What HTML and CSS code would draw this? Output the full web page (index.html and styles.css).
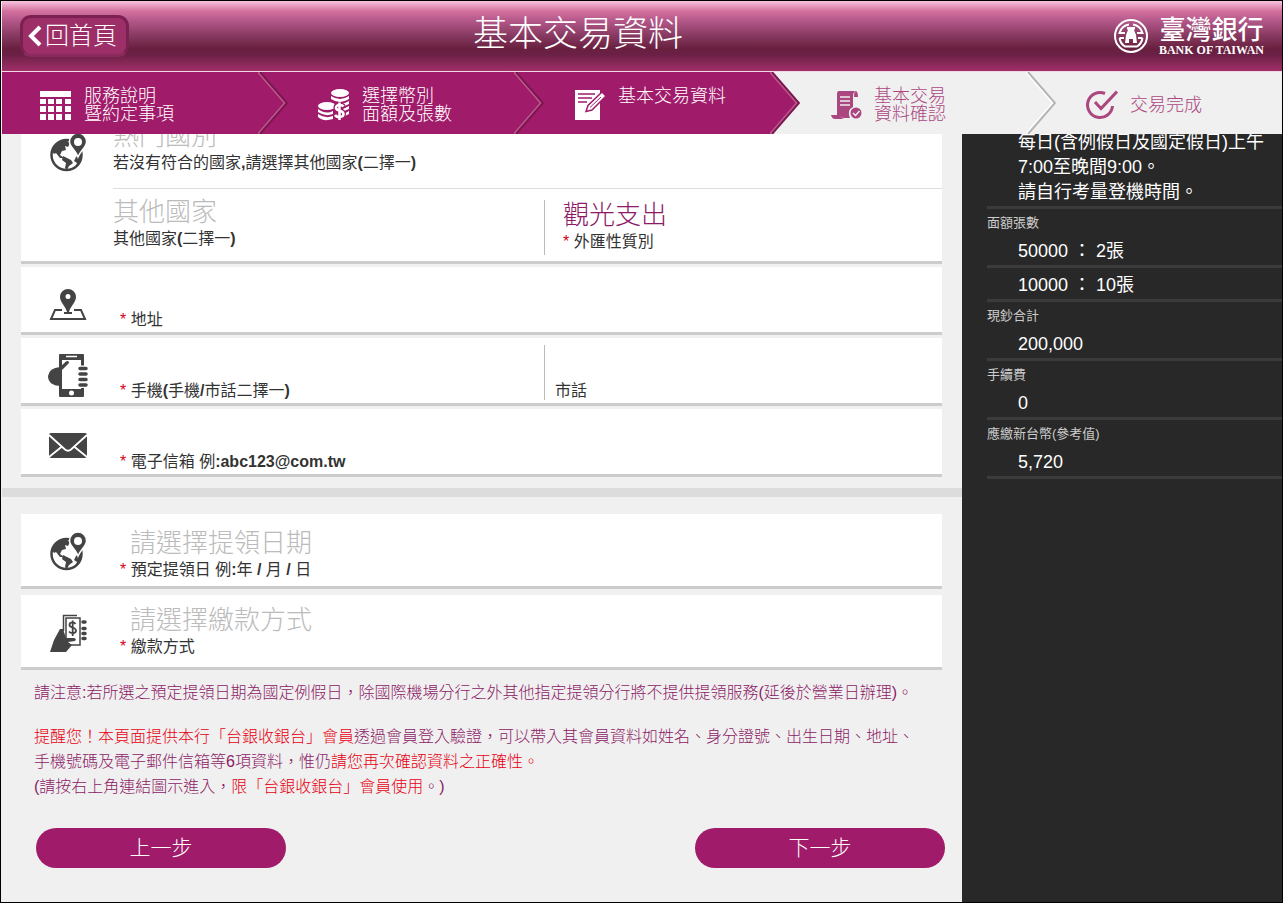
FILE: index.html
```html
<!DOCTYPE html>
<html lang="zh-Hant">
<head>
<meta charset="UTF-8">
<meta name="viewport" content="width=device-width, initial-scale=1.0">
<title>基本交易資料</title>
<link rel="stylesheet" href="styles.css">
</head>
<body>
<header class="topbar">
  <div class="topbar-left">
    <button type="button" class="home-btn">
      <svg width="14" height="22" viewBox="0 0 14 22"><path d="M12 2 L3 11 L12 20" fill="none" stroke="#fff" stroke-width="4"/></svg>回首頁
    </button>
  </div>
  <h1>基本交易資料</h1>
  <a href="#" class="logo">
    <svg width="36" height="36" viewBox="0 0 36 36">
      <g fill="none" stroke="#fff">
        <circle cx="18" cy="18" r="16" stroke-width="2"/>
        <path d="M16 6.500 A12 12 0 0 0 6.500 15 H12 M20 6.500 A12 12 0 0 1 29.500 15 H24 M6.500 20 H11 M29.500 20 H25 M6.500 20 A12 12 0 0 0 12 28.500 H24 A12 12 0 0 0 29.500 20" stroke-width="2"/>
      </g>
      <path d="M14 9 H22 V11 L21 12 L23 17 L24 25 H20 V21 H16 V25 H12 L13 17 L15 12 L14 11 Z" fill="#fff"/>
    </svg>
    <span class="logo-text">
      <span class="logo-zh">臺灣銀行</span>
      <span class="logo-en">BANK OF TAIWAN</span>
    </span>
  </a>
</header>

<nav>
  <ol class="steps">
    <li class="step done">
      <svg class="step-icon" viewBox="0 0 32 32" fill="#fff">
        <path d="M0 2h31v6H0z M0 10h6v5H0z M8 10h6v5H8z M16 10h6v5h-6z M25 10h6v5h-6z M0 17h6v6H0z M8 17h6v6H8z M16 17h6v6h-6z M25 17h6v6h-6z M0 25h6v6H0z M8 25h6v6H8z M16 25h6v6h-6z M25 25h6v6h-6z"/>
      </svg>
      <span>服務說明<br>暨約定事項</span>
      <svg class="arrow" viewBox="0 0 30 62"><path class="fill" d="M0 0 L28 31 L0 62 Z"/><path class="light" d="M0 0 L27 31 L0 62"/><path class="line" d="M2 0 L29 31 L2 62"/></svg>
    </li>
    <li class="step done">
      <svg class="step-icon" viewBox="0 0 32 32" fill="#fff">
        <ellipse cx="22" cy="4" rx="9" ry="4"/>
        <path d="M13 7 Q22 13 31 7 V10 Q22 16 13 10 Z M20 14.500 Q27 15 31 12 V15 Q26 18 20 17 Z M25 20 L31 17 V20 L26 22 Z M26 25 L31 22 V25 L27 27 Z"/>
        <ellipse cx="9" cy="17" rx="9" ry="4"/>
        <path d="M0 20 Q8 26 15 22 V25 Q7 28 0 23 Z M0 25 Q7 30 15 27 V30 Q5 33 0 28 Z"/>
        <path d="M25.500 17.500 C24 15 17.500 15.500 18 19 C18.500 22.500 25.500 21 25.500 25 C25.500 29 18.500 28.500 17 26 M21.500 13.500 V31" fill="none" stroke="#a11b6b" stroke-width="5"/>
        <path d="M25.500 17.500 C24 15 17.500 15.500 18 19 C18.500 22.500 25.500 21 25.500 25 C25.500 29 18.500 28.500 17 26 M21.500 13.500 V31" fill="none" stroke="#fff" stroke-width="2.500"/>
      </svg>
      <span>選擇幣別<br>面額及張數</span>
      <svg class="arrow" viewBox="0 0 30 62"><path class="fill" d="M0 0 L28 31 L0 62 Z"/><path class="light" d="M0 0 L27 31 L0 62"/><path class="line" d="M2 0 L29 31 L2 62"/></svg>
    </li>
    <li class="step done">
      <svg class="step-icon" viewBox="0 0 32 32">
        <path d="M1 1h25v30H1z" fill="#fff"/>
        <path d="M4 5h17 M4 9h14 M4 13h9" stroke="#a11b6b" stroke-width="1.500"/>
        <path d="M12 22.500 L14 16.500 L28 3 L32 7 L18 21 Z" fill="#fff" stroke="#a11b6b" stroke-width="1.500"/>
        <path d="M16 18.500 L27 8" stroke="#a11b6b" stroke-width="1"/>
      </svg>
      <span>基本交易資料<br>&nbsp;</span>
      <svg class="arrow" viewBox="0 0 30 62"><path class="fill" d="M0 0 L28 31 L0 62 Z"/><path class="light" d="M0 0 L27 31 L0 62"/><path class="line" d="M2 0 L29 31 L2 62"/></svg>
    </li>
    <li class="step">
      <svg class="step-icon" viewBox="0 0 32 32" fill="#ab477f">
        <path d="M9 2 H25 Q23 4 23 8 V18 Q18 20 19 26 L20 29 H14 Q10 29 10 26 H7 V5 Q7 2 9 2 Z"/>
        <path d="M24 8 Q24 2 26 2 Q28 3 28 8 Z"/>
        <path d="M1 26 H10 Q11 29 14 30 H5 Q2 30 1 26 Z"/>
        <path d="M10 8h10 M10 12h10 M10 16h10" stroke="#f0f0f0" stroke-width="1.500"/>
        <circle cx="26" cy="24" r="5.500"/>
        <path d="M23 24 L25.500 26.500 L29.500 22" fill="none" stroke="#f0f0f0" stroke-width="1.500"/>
      </svg>
      <span>基本交易<br>資料確認</span>
      <svg class="arrow" viewBox="0 0 30 62"><path class="fill" d="M0 0 L28 31 L0 62 Z"/><path class="light" d="M0 0 L27 31 L0 62"/><path class="line" d="M2 0 L29 31 L2 62"/></svg>
    </li>
    <li class="step">
      <svg class="step-icon" viewBox="0 0 32 32" fill="none" stroke="#ab477f" stroke-width="3">
        <path d="M19 4.500 A12.500 12.500 0 1 0 26.500 17"/>
        <path d="M9 13 L15 19.500 L31 2.500"/>
      </svg>
      <span>交易完成</span>
    </li>
  </ol>
</nav>

<div class="layout">
  <main>
    <form>
      <section class="cards">
        <div class="card first">
          <svg class="icon" viewBox="0 0 40 44"><use href="#globe"/></svg>
          <div class="fields">
            <div class="field hot">
              <select id="hotCountry"><option>熱門國別</option></select>
              <label for="hotCountry">若沒有符合的國家<b>,</b>請選擇其他國家<b>(</b>二擇一<b>)</b></label>
            </div>
            <div class="row">
              <div class="field other">
                <select id="otherCountry"><option>其他國家</option></select>
                <label for="otherCountry">其他國家<b>(</b>二擇一<b>)</b></label>
              </div>
              <div class="field side purpose">
                <select id="purpose" class="chosen"><option>觀光支出</option></select>
                <label for="purpose"><i>*</i> 外匯性質別</label>
              </div>
            </div>
          </div>
        </div>

        <div class="card">
          <svg class="icon" viewBox="0 0 40 44" fill="#444">
            <path fill-rule="evenodd" d="M20 6 A8 8 0 0 1 28 14 C28 19 22 24 21 29 H24 V31 H16 V29 H19 C18 24 12 19 12 14 A8 8 0 0 1 20 6 Z M20 11 A2.500 2.500 0 1 0 20 16 A2.500 2.500 0 1 0 20 11 Z"/>
            <path d="M14 27 H7 L3 36 H37 L33 27 H26" fill="none" stroke="#444" stroke-width="2"/>
          </svg>
          <div class="fields">
            <div class="field text">
              <input type="text" id="address">
              <label for="address"><i>*</i> 地址</label>
            </div>
          </div>
        </div>

        <div class="card">
          <svg class="icon" viewBox="0 0 40 44" fill="#444">
            <path fill-rule="evenodd" d="M12 0 H35 Q36 0 36 1 V42 Q36 43 35 43 H12 Q11 43 11 42 V1 Q11 0 12 0 Z M14 6 V35 H33 V6 Z"/>
            <path d="M18 2.500 H29" stroke="#fff" stroke-width="1.500"/>
            <circle cx="23.500" cy="39" r="2.500" fill="#fff"/>
            <path d="M12 13 L18 7.500 Q20 6.500 21 8 Q21 9.500 20 10 L14 16 V32 Q0 32 0 22 Q1 14 12 13 Z"/>
            <path d="M32 14.500 H38 M32 20 H38 M32 25.500 H38 M32 31 H38" stroke="#fff" stroke-width="6"/>
            <path d="M32 14.500 H38 M32 20 H38 M32 25.500 H38 M32 31 H38" stroke="#444" stroke-width="3.500" stroke-linecap="round"/>
          </svg>
          <div class="fields row">
            <div class="field text other">
              <input type="tel" id="mobile">
              <label for="mobile"><i>*</i> 手機<b>(</b>手機<b>/</b>市話二擇一<b>)</b></label>
            </div>
            <div class="field side phone">
              <input type="tel" id="phone">
              <label for="phone">市話</label>
            </div>
          </div>
        </div>

        <div class="card">
          <svg class="icon" viewBox="0 0 40 44" fill="#444">
            <rect x="1" y="8" width="38" height="25" rx="2"/>
            <path d="M1 10 L17 24.500 Q20 27 23 24.500 L39 10 M1 32 L14 21.500 M39 32 L26 21.500" fill="none" stroke="#fff" stroke-width="1.800"/>
          </svg>
          <div class="fields">
            <div class="field text">
              <input type="email" id="email">
              <label for="email"><i>*</i> 電子信箱 例<b>:abc123@com.tw</b></label>
            </div>
          </div>
        </div>
      </section>

      <section class="cards pickup">
        <div class="card tall date">
          <svg class="icon" viewBox="0 0 40 44">
            <g id="globe">
              <circle cx="18.500" cy="24" r="15" fill="#fff" stroke="#444" stroke-width="2.500"/>
              <path d="M4 20 Q7 9 18 9 L22 12 L20 16 L17 15 L18 19 L14 20 L12 24 L16 27 L12 27 L8 22 L6 23 Z" fill="#444"/>
              <path d="M15 25 L23 29 L25 32 L21 35 L19 39 L17 37 L18 32 L14 29 Z" fill="#444"/>
              <path d="M28 26 L33 21 L34 26 Q33 34 27 37 L29 32 L26 30 Z" fill="#444"/>
              <path d="M30 2 A8.500 8.500 0 0 1 38.500 11 C38.500 16 33 19 30 26 C28 19 21.500 16 21.500 11 A8.500 8.500 0 0 1 30 2 Z" fill="#444" stroke="#fff" stroke-width="1.500"/>
              <circle cx="30" cy="11" r="4" fill="#fff"/>
            </g>
          </svg>
          <div class="fields">
            <div class="field text">
              <select id="pickupDate"><option>請選擇提領日期</option></select>
              <label for="pickupDate"><i>*</i> 預定提領日 例<b>:</b>年 <b>/</b> 月 <b>/</b> 日</label>
            </div>
          </div>
        </div>

        <div class="card tall pay">
          <svg class="icon" viewBox="0 0 40 44" fill="#444">
            <path d="M15.500 20 V4.500 H29" fill="none" stroke="#444" stroke-width="1.500"/>
            <path d="M18 7 H32 V34 H18 Z" fill="#fff" stroke="#444" stroke-width="1.500"/>
            <path d="M27.500 13 C26 10.500 21.500 11 21.500 14 C21.500 17 28 16 28 19.500 C28 23 22.500 22.500 21 20.500 M24.700 9.500 V25" fill="none" stroke="#444" stroke-width="1.800"/>
            <path d="M12 18 H15 L18 27 H26 Q29 28 27 30 L20 31 L24 34 L18 41 H2 L6 29 Z"/>
            <path d="M35 11 h2 M35 17.500 h2 M35 22.500 h2 M35 27.500 h2" stroke="#444" stroke-width="3.500" stroke-linecap="round"/>
          </svg>
          <div class="fields">
            <div class="field text">
              <select id="payment"><option>請選擇繳款方式</option></select>
              <label for="payment"><i>*</i> 繳款方式</label>
            </div>
          </div>
        </div>

        <div class="notice">
          <p>請注意:若所選之預定提領日期為國定例假日，除國際機場分行之外其他指定提領分行將不提供提領服務(延後於營業日辦理)。</p>
          <p><em>提醒您！本頁面提供本行「台銀收銀台」會員</em>透過會員登入驗證，可以帶入其會員資料如姓名、身分證號、出生日期、地址、<br>
          手機號碼及電子郵件信箱等6項資料，惟仍<em>請您再次確認資料之正確性。</em><br>
          (請按右上角連結圖示進入，<em>限「台銀收銀台」會員使用</em>。)</p>
        </div>
      </section>

      <div class="actions">
        <button type="button">上一步</button>
        <button type="button">下一步</button>
      </div>
    </form>
  </main>

  <aside>
    <dl>
      <dd class="hours">每日(含例假日及國定假日)上午7:00至晚間9:00。<br>請自行考量登機時間。</dd>
      <dt>面額張數</dt>
      <dd>50000 ： 2張</dd>
      <dd class="more">10000 ： 10張</dd>
      <dt>現鈔合計</dt>
      <dd>200,000</dd>
      <dt>手續費</dt>
      <dd>0</dd>
      <dt>應繳新台幣(參考值)</dt>
      <dd>5,720</dd>
    </dl>
  </aside>
</div>
</body>
</html>
```

FILE: styles.css
```css
* {
  box-sizing: border-box;
}

body {
  margin: 0;
  min-height: 100vh;
  display: flex;
  flex-direction: column;
  padding-left: 1px;
  border: 1px solid #000;
  background: #f0f0f0;
  font-family: "Liberation Sans", "Noto Sans CJK TC", sans-serif;
  font-size: 16px;
  color: #333;
}

button, input, select {
  font-family: inherit;
  margin: 0;
}

h1, p, ol, dl, dd {
  margin: 0;
  padding: 0;
}

/* top bar */
.topbar {
  display: grid;
  grid-template-columns: 20% 50% 30%;
  align-items: center;
  height: 70px;
  background: linear-gradient(#f8c4de 0, #d4729f 14%, #b4588a 28%, #863960 50%, #69203f 68%, #6a2045 76%, #a02f68 100%);
}

.topbar-left {
  padding-left: 18px;
}

.home-btn {
  display: flex;
  align-items: center;
  gap: 3px;
  height: 42px;
  padding: 0 9px 0 5px;
  border: 3px solid #7c1f51;
  border-bottom-color: #8b2a5c;
  border-radius: 11px;
  background: #9c2e68;
  color: #fff;
  font-size: 24px;
  font-weight: 300;
  line-height: 36px;
}

h1 {
  color: #fff;
  font-size: 35px;
  font-weight: 300;
  line-height: 66px;
  text-align: center;
  height: 70px;
}

.logo {
  display: flex;
  justify-content: flex-end;
  align-items: center;
  gap: 10px;
  padding-right: 18px;
  color: #fff;
  text-decoration: none;
}

.logo-text {
  display: flex;
  flex-direction: column;
  align-items: center;
}

.logo-zh {
  font-size: 26px;
  font-weight: 500;
  line-height: 28px;
}

.logo-en {
  font-family: "Liberation Serif", serif;
  font-size: 12px;
  font-weight: bold;
  line-height: 12px;
}

/* step bar */
.steps {
  display: grid;
  grid-template-columns: repeat(5, 1fr);
  height: 63px;
  border-top: 1px solid #f3d9e6;
  list-style: none;
}

.step {
  position: relative;
  display: flex;
  align-items: center;
  gap: 12px;
  padding-top: 3px;
  padding-left: 60px;
  background: #f0f0f0;
  color: #ab477f;
  font-size: 18px;
  font-weight: 300;
  line-height: 18px;
}

.step:first-child {
  padding-left: 38px;
}

.step.done {
  background: #a11b6b;
  color: #fff;
}

.step-icon {
  width: 32px;
  height: 32px;
}

.arrow {
  position: absolute;
  top: 0;
  left: 100%;
  width: 30px;
  height: 62px;
  z-index: 1;
}

.arrow path {
  fill: none;
  stroke-width: 2;
}

.arrow .fill { fill: #f0f0f0; }
.arrow .light { stroke: #fff; }
.arrow .line { stroke: #b4b4b4; }
.done .arrow .fill { fill: #a11b6b; }
.done .arrow .light { stroke: #bb5a8c; }
.done .arrow .line { stroke: #7c1650; }

/* two columns under the bars */
.layout {
  flex: 1;
  display: grid;
  grid-template-columns: 3fr 1fr;
  overflow: hidden;
}

main {
  min-width: 0;
}

aside {
  min-width: 0;
  padding-left: 25px;
  background: #282828;
}

/* form cards */
.cards {
  padding: 0 20px 8px 19px;
}

.card {
  display: flex;
  gap: 25px;
  min-height: 68px;
  margin-bottom: 3px;
  padding-left: 27px;
  border-bottom: 3px solid #ccc;
  background: #fff;
}

/* scrolled partly under the step bar */
.card.first {
  margin-top: -19px;
  padding-top: 6px;
}

.card.first .icon {
  margin-top: 10px;
}

.card.tall {
  min-height: 75px;
  margin-bottom: 6px;
}

.icon {
  flex: none;
  width: 40px;
  height: 44px;
  margin-top: 16px;
}

.fields {
  flex: 1;
}

.row {
  display: flex;
}

.field input,
.field select {
  display: block;
  width: 100%;
  height: 30px;
  padding: 0;
  border: 0;
  outline: 0;
  background: transparent;
  appearance: none;
  color: #bbb;
  font-size: 26px;
  font-weight: 300;
}

.field input {
  height: 41px;
  color: #333;
}

.field select.chosen {
  color: #8c1a66;
}

.field label {
  display: block;
  line-height: 24px;
}

.field label i {
  color: #d0021b;
  font-style: normal;
}

.text {
  padding-left: 7px;
}

.text select {
  padding-left: 10px;
}

.hot {
  padding-bottom: 13px;
  border-bottom: 1px solid #ddd;
}

.other {
  width: 52%;
}

.first .other {
  padding: 8px 0 10px;
}

.side {
  flex: 1;
  border-left: 1px solid #bbb;
}

.purpose {
  height: 55px;
  margin-top: 11px;
  padding-left: 18px;
}

.phone {
  height: 55px;
  margin-top: 7px;
  padding-left: 10px;
}

.phone input {
  height: 34px;
}

.pickup {
  padding-top: 17px;
  border-top: 9px solid #dcdcdc;
}

.date .fields {
  padding-top: 14px;
}

.pay .fields {
  padding-top: 10px;
}

/* notice text */
.notice {
  padding: 4px 0 3px 13px;
  color: #8c1a66;
  font-weight: 300;
  line-height: 25px;
}

.notice p + p {
  margin-top: 19px;
}

.notice em {
  color: #e60012;
  font-style: normal;
}

.actions {
  display: flex;
  justify-content: space-between;
  padding: 18px 17px 20px 34px;
}

.actions button {
  width: 250px;
  height: 40px;
  padding: 0;
  border: 0;
  border-radius: 20px;
  background: #a11b6b;
  color: #fff;
  font-size: 21px;
  font-weight: 300;
  line-height: 38px;
}

/* summary column */
dt {
  color: #ccc;
  font-size: 13px;
  line-height: 28px;
}

dd {
  padding-left: 31px;
  border-bottom: 3px solid #3b3b3b;
  color: #fff;
  font-size: 18px;
  line-height: 28px;
}

dd.hours {
  margin-top: -4px;
  padding: 0 16px 1px 31px;
  line-height: 25px;
}

dd.more {
  padding-top: 3px;
}
```
